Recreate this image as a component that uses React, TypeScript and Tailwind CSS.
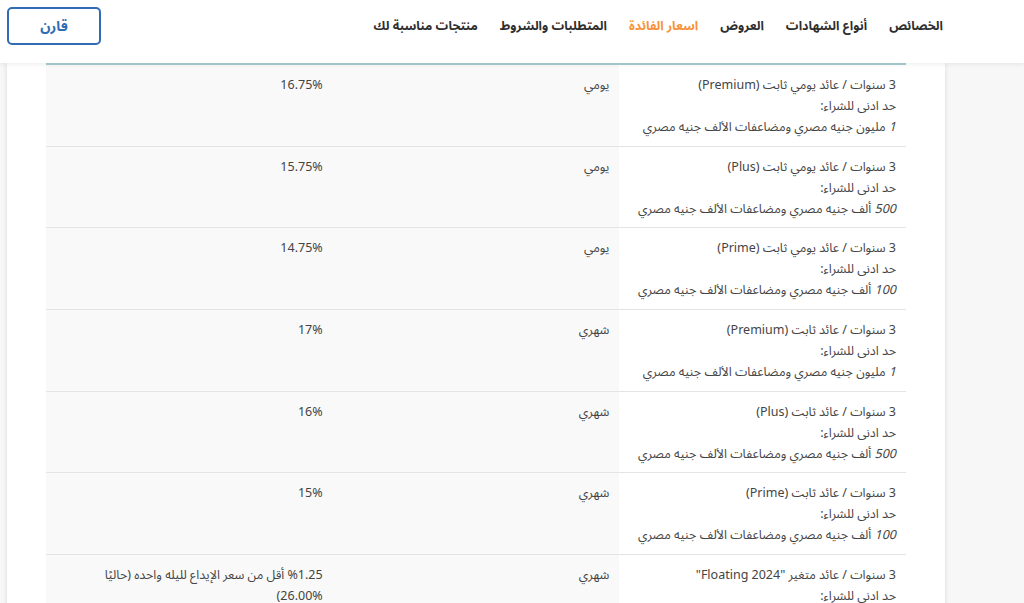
import React from 'react';

interface Rate {
    title: string;
    min: React.ReactNode;
    period: string;
    rate: string;
}

const navItems = [
    { label: 'الخصائص', active: false },
    { label: 'أنواع الشهادات', active: false },
    { label: 'العروض', active: false },
    { label: 'اسعار الفائدة', active: true },
    { label: 'المتطلبات والشروط', active: false },
    { label: 'منتجات مناسبة لك', active: false },
];

const rest = 'جنيه مصري ومضاعفات الألف جنيه مصري';

const rates: Rate[] = [
    { title: '3 سنوات / عائد يومي ثابت (Premium)', min: <><i>1</i> مليون {rest}</>, period: 'يومي', rate: '16.75%' },
    { title: '3 سنوات / عائد يومي ثابت (Plus)', min: <><i>500</i> ألف {rest}</>, period: 'يومي', rate: '15.75%' },
    { title: '3 سنوات / عائد يومي ثابت (Prime)', min: <><i>100</i> ألف {rest}</>, period: 'يومي', rate: '14.75%' },
    { title: '3 سنوات / عائد ثابت (Premium)', min: <><i>1</i> مليون {rest}</>, period: 'شهري', rate: '17%' },
    { title: '3 سنوات / عائد ثابت (Plus)', min: <><i>500</i> ألف {rest}</>, period: 'شهري', rate: '16%' },
    { title: '3 سنوات / عائد ثابت (Prime)', min: <><i>100</i> ألف {rest}</>, period: 'شهري', rate: '15%' },
    { title: '3 سنوات / عائد متغير "Floating 2024"', min: <><i>1</i> مليون {rest}</>, period: 'شهري', rate: '%1.25 أقل من سعر الإيداع لليله واحده (حاليًا %26.00)' },
];

const Header = () => {
    return (
        <header className="relative z-10 flex h-[63px] items-start justify-between bg-white pl-[7px] pr-[81px] pt-[7px] shadow-[0_2px_4px_rgba(0,0,0,0.06)]">
            <nav className="flex h-[38px] items-center gap-[22px]">
                {navItems.map((item) => (
                    <a
                        key={item.label}
                        className={`whitespace-nowrap text-[12.5px] font-bold ${item.active ? 'text-[#f7923a]' : 'text-[#2e2e2e]'}`}
                    >
                        {item.label}
                    </a>
                ))}
            </nav>
            <button className="h-[38px] w-[94px] rounded-[5px] border-2 border-[#2f6cb4] text-[14px] font-bold text-[#2f6cb4]">
                قارن
            </button>
        </header>
    );
};

const App = () => {
    return (
        <div dir="rtl" className="min-h-screen bg-[#f7f7f7] font-['Noto_Sans_Arabic','Noto_Sans','DejaVu_Sans',sans-serif]">
            <Header />
            <div className="ml-[7px] mr-[79px] min-h-[540px] bg-white px-[39px] shadow-[0_0_5px_rgba(0,0,0,0.12)]">
                <div className="border-t-2 border-[#a6cdd0]">
                    {rates.map((r) => (
                        <div key={r.title + r.rate} className="grid grid-cols-3 border-b border-[#e4e4e4] text-[12.5px] leading-[21px] text-[#444]">
                            <div className="whitespace-nowrap bg-white px-[10px] pb-[7.67px] pt-[10px]">
                                <p>{r.title}</p>
                                <p>حد ادنى للشراء:</p>
                                <p>{r.min}</p>
                            </div>
                            <div className="bg-[#f9f9f9] px-[10px] pt-[10px]">{r.period}</div>
                            <div className="bg-[#f9f9f9] px-[10px] pt-[10px]">{r.rate}</div>
                        </div>
                    ))}
                </div>
            </div>
        </div>
    );
};

export default App;
